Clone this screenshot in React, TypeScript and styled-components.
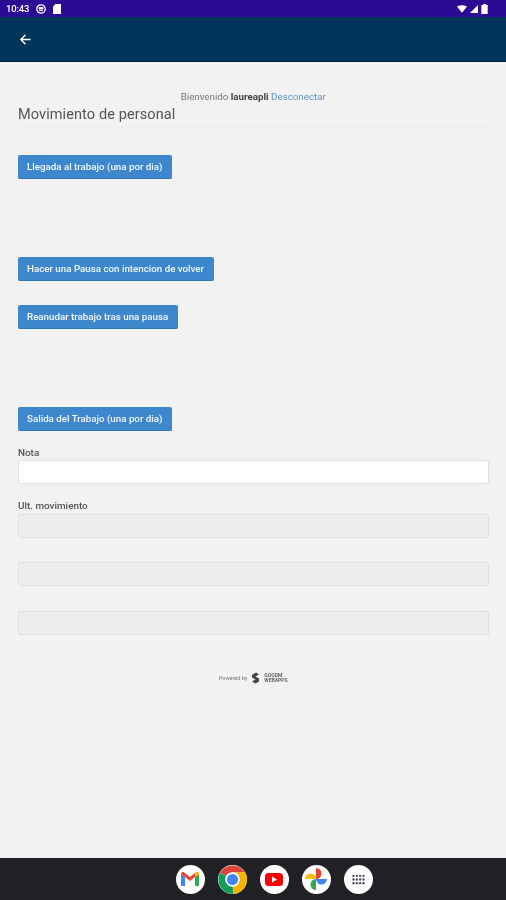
import styled, { createGlobalStyle } from 'styled-components'

const GlobalStyle = createGlobalStyle`
  html, body {
    margin: 0;
    padding: 0;
    background: #f2f2f2;
  }
  * {
    box-sizing: border-box;
  }
`

const Screen = styled.div`
  width: 506px;
  height: 900px;
  display: flex;
  flex-direction: column;
  font-family: Roboto, "Liberation Sans", sans-serif;
  background: #f2f2f2;
  overflow: hidden;
  filter: blur(0.35px);
`

const StatusBar = styled.div`
  height: 17px;
  padding: 0 18px 0 6px;
  background: #2d0a94;
  color: #fff;
  display: flex;
  align-items: center;
  justify-content: space-between;
`

const StatusGroup = styled.div`
  display: flex;
  align-items: center;
  gap: 3px;
`

const Clock = styled.span`
  font-size: 9.5px;
  font-weight: 500;
  letter-spacing: -0.2px;
  margin-right: 4px;
`

const SdSlot = styled.span`
  display: flex;
  margin-left: 4px;
`

const Toolbar = styled.div`
  height: 45px;
  padding-left: 18px;
  background: #00355a;
  border-bottom: 1px solid #0a1d3c;
  display: flex;
  align-items: center;
`

const Content = styled.main`
  flex: 1;
  padding: 28px 17.5px 0 18px;
  display: flex;
  flex-direction: column;
`

const Welcome = styled.div`
  font-size: 9.75px;
  line-height: 14px;
  color: #777;
  text-align: center;
`

const UserName = styled.b`
  color: #444;
`

const Logout = styled.span`
  color: #5b93cc;
`

const Heading = styled.h1`
  margin: 2px 0 0;
  padding-bottom: 2px;
  font-size: 14.5px;
  line-height: 18px;
  font-weight: 400;
  color: #555;
  letter-spacing: 0.1px;
  border-bottom: 1px solid #ececec;
`

const ActionButton = styled.button<{ $top: number }>`
  align-self: flex-start;
  height: 24px;
  margin-top: ${(p) => p.$top}px;
  padding: 0 9.5px 1px 9px;
  border: 0;
  border-bottom: 1px solid #2f78b8;
  border-radius: 2px;
  background: #3d88cd;
  color: #f2f7fc;
  font-family: inherit;
  font-size: 9.75px;
  font-weight: 500;
  white-space: nowrap;
`

const FieldLabel = styled.label<{ $top: number }>`
  display: block;
  margin-top: ${(p) => p.$top}px;
  font-size: 9.9px;
  line-height: 12px;
  font-weight: 500;
  color: #555;
`

const Field = styled.div<{ $top: number; $disabled?: boolean }>`
  height: 24px;
  margin-top: ${(p) => p.$top}px;
  border: 1px solid #e0e0e0;
  border-radius: 2px;
  background: ${(p) => (p.$disabled ? '#eeeeee' : '#ffffff')};
`

const Powered = styled.div`
  margin-top: 37px;
  display: flex;
  align-items: center;
  justify-content: center;
  gap: 4px;
  font-size: 5.5px;
  color: #777;
`

const BrandText = styled.span`
  font-size: 5px;
  line-height: 5px;
  font-weight: 700;
  color: #666;
`

const Dock = styled.div`
  height: 42px;
  background: #202124;
  display: flex;
  align-items: center;
  justify-content: center;
  gap: 13px;
  padding-left: 42px;
`

const DockIcon = styled.div`
  width: 29px;
  height: 29px;
  border-radius: 50%;
  background: #fff;
  display: flex;
  align-items: center;
  justify-content: center;
`

const Wifi = () => (
  <svg width="10" height="8" viewBox="0 0 12 9">
    <path d="M0 1.5 C3.5 -0.5 8.5 -0.5 12 1.5 L6 9 Z" fill="#fff" />
  </svg>
)

const Signal = () => (
  <svg width="8" height="8" viewBox="0 0 9 9">
    <path d="M9 0 V9 H0 Z" fill="#fff" />
  </svg>
)

const Battery = () => (
  <svg width="7" height="10" viewBox="0 0 7 11">
    <path d="M2 0 H5 V1 H7 V11 H0 V1 H2 Z" fill="#fff" />
  </svg>
)

const SdCard = () => (
  <svg width="8" height="10" viewBox="0 0 8 10">
    <path d="M2.5 0 H8 V10 H0 V2.5 Z" fill="#fff" />
  </svg>
)

const FaceBadge = () => (
  <svg width="10" height="10" viewBox="0 0 10 10">
    <circle cx="5" cy="5" r="4.2" fill="none" stroke="#fff" strokeWidth="1.3" />
    <rect x="2.6" y="3" width="4.8" height="2.4" rx="1" fill="#fff" />
    <path d="M3 6.6 H7" stroke="#fff" strokeWidth="0.9" />
  </svg>
)

const BackArrow = () => (
  <svg width="15" height="15" viewBox="0 0 24 24">
    <path d="M20 12 H5 M12 4.5 L4.5 12 L12 19.5" fill="none" stroke="#fff" strokeWidth="2.2" />
  </svg>
)

const BrandMark = () => (
  <svg width="9" height="12" viewBox="0 0 9 12">
    <path d="M1 3 L5 0.5 L8 2.5 L4.5 4.5 L8 6.5 L8 9.5 L4.5 11.5 L1 9.5 L4.5 7.5 L1 5.5 Z" fill="#444" />
  </svg>
)

const GmailIcon = () => (
  <svg width="18" height="14" viewBox="0 0 18 14">
    <path d="M0 2 V14 H4 V5 Z" fill="#4285f4" />
    <path d="M14 5 V14 H18 V2 Z" fill="#34a853" />
    <path d="M0 2 C0 0.2 2 -0.5 3.2 0.5 L9 5 L14.8 0.5 C16 -0.5 18 0.2 18 2 L14 5 L9 9 L4 5 Z" fill="#ea4335" />
    <path d="M14 5 L18 2 C18 0.2 16 -0.5 14.8 0.5 L14 1.2 Z" fill="#fbbc04" />
  </svg>
)

const ChromeIcon = () => (
  <svg width="29" height="29" viewBox="0 0 28 28">
    <path d="M14 14 L2 7.5 A14 14 0 0 1 26.1 7 L14 7 Z" fill="#db4437" />
    <path d="M14 14 L14 7 L26.1 7 A14 14 0 0 1 14.5 28 Z" fill="#f4b400" />
    <path d="M14 14 L14.5 28 A14 14 0 0 1 2 7.5 Z" fill="#0f9d58" />
    <circle cx="14" cy="14" r="7" fill="#fff" />
    <circle cx="14" cy="14" r="5.4" fill="#4285f4" />
  </svg>
)

const YoutubeIcon = () => (
  <svg width="18" height="13" viewBox="0 0 18 13">
    <rect width="18" height="13" rx="3.5" fill="#f00" />
    <path d="M7 3.5 L12 6.5 L7 9.5 Z" fill="#fff" />
  </svg>
)

const PhotosIcon = () => (
  <svg width="22" height="22" viewBox="0 0 20 20">
    <path d="M10 10 H0 A5 5 0 0 1 10 10 Z" fill="#fbbc04" />
    <path d="M10 10 V0 A5 5 0 0 1 10 10 Z" fill="#ea4335" />
    <path d="M10 10 H20 A5 5 0 0 1 10 10 Z" fill="#4285f4" />
    <path d="M10 10 V20 A5 5 0 0 1 10 10 Z" fill="#34a853" />
  </svg>
)

const AppsIcon = () => (
  <svg width="13" height="11" viewBox="0 0 14 12" fill="#4a4f6a">
    {[2, 6, 10].map((cy) =>
      [1.5, 5.2, 8.8, 12.5].map((cx) => <circle key={`${cx}-${cy}`} cx={cx} cy={cy} r="1.3" />)
    )}
  </svg>
)

const App = () => {
  return (
    <>
      <GlobalStyle />
      <Screen>
        <StatusBar>
          <StatusGroup>
            <Clock>10:43</Clock>
            <FaceBadge />
            <SdSlot>
              <SdCard />
            </SdSlot>
          </StatusGroup>
          <StatusGroup>
            <Wifi />
            <Signal />
            <Battery />
          </StatusGroup>
        </StatusBar>
        <Toolbar>
          <BackArrow />
        </Toolbar>
        <Content>
          <Welcome>
            Bienvenido <UserName>laureapli</UserName> <Logout>Desconectar</Logout>
          </Welcome>
          <Heading>Movimiento de personal</Heading>

          <ActionButton $top={28}>Llegada al trabajo (una por dia)</ActionButton>
          <ActionButton $top={78}>Hacer una Pausa con intencion de volver</ActionButton>
          <ActionButton $top={24}>Reanudar trabajo tras una pausa</ActionButton>
          <ActionButton $top={78}>Salida del Trabajo (una por dia)</ActionButton>

          <FieldLabel $top={16}>Nota</FieldLabel>
          <Field $top={1} />
          <FieldLabel $top={16}>Ult. movimiento</FieldLabel>
          <Field $top={2} $disabled />
          <Field $top={24} $disabled />
          <Field $top={25} $disabled />

          <Powered>
            Powered by
            <BrandMark />
            <BrandText>
              GOODM
              <br />
              WEBAPPS
            </BrandText>
          </Powered>
        </Content>
        <Dock>
          <DockIcon>
            <GmailIcon />
          </DockIcon>
          <DockIcon>
            <ChromeIcon />
          </DockIcon>
          <DockIcon>
            <YoutubeIcon />
          </DockIcon>
          <DockIcon>
            <PhotosIcon />
          </DockIcon>
          <DockIcon>
            <AppsIcon />
          </DockIcon>
        </Dock>
      </Screen>
    </>
  )
}

export default App
